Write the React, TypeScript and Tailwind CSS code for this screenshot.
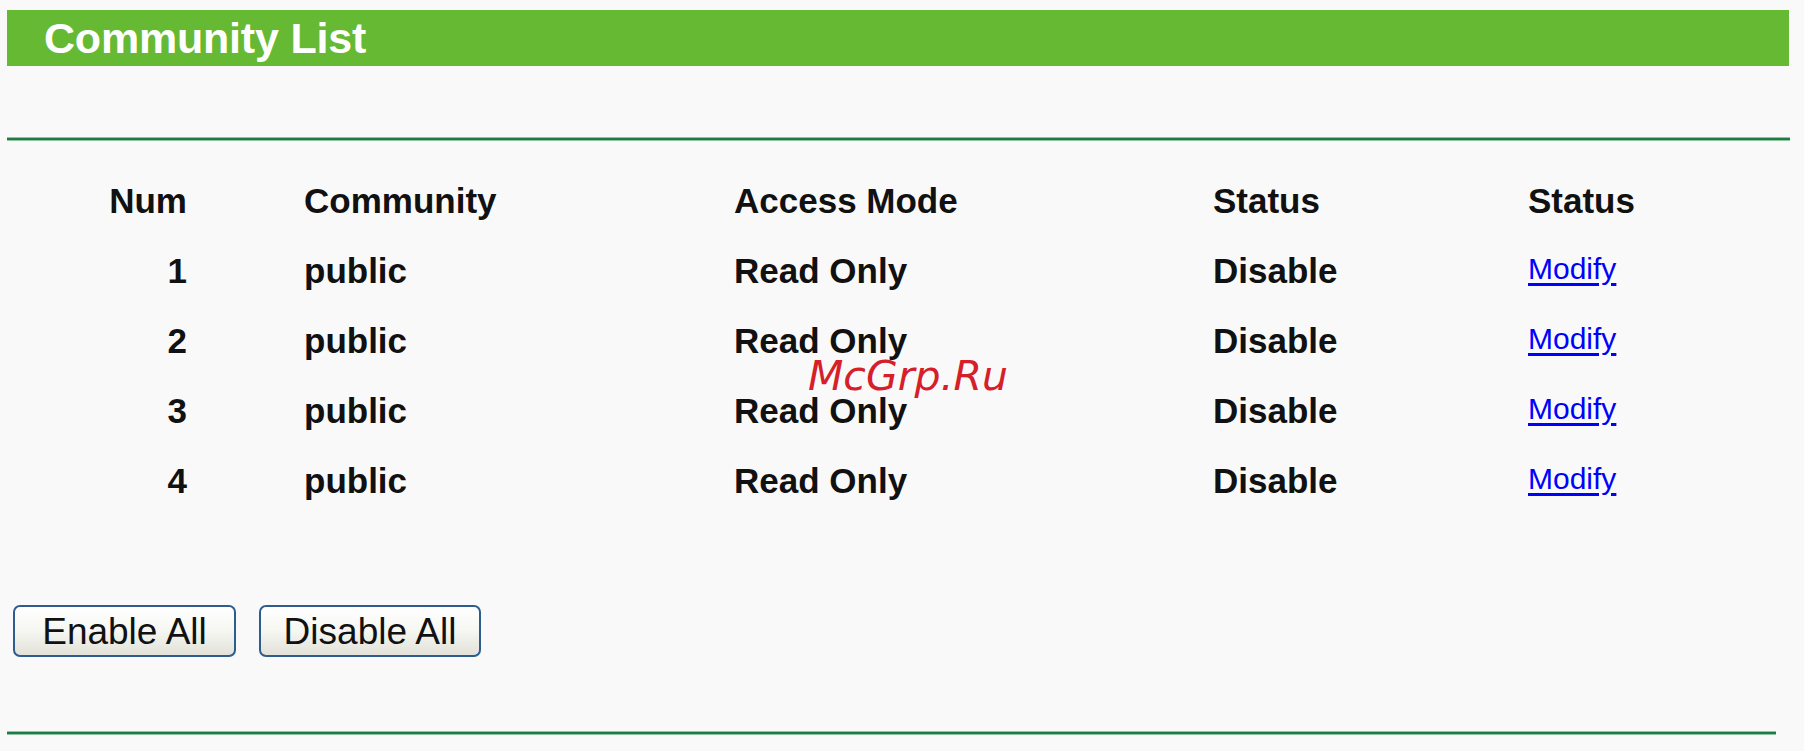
const rows = [
  { num: 1, community: 'public', mode: 'Read Only', status: 'Disable' },
  { num: 2, community: 'public', mode: 'Read Only', status: 'Disable' },
  { num: 3, community: 'public', mode: 'Read Only', status: 'Disable' },
  { num: 4, community: 'public', mode: 'Read Only', status: 'Disable' },
]

function Rule({ width }: { width: string }) {
  return <div className={`${width} h-[4px] border-y border-[#8fc6a2] bg-[#1f7a45]`} />
}

function Row({ cells, link }: { cells: string[]; link?: boolean }) {
  return (
    <div className="grid grid-cols-[180px_547px_479px_315px_1fr] h-[70px] items-center leading-none text-[35px] font-bold text-[#111]">
      <div className="text-right">{cells[0]}</div>
      <div className="pl-[117px]">{cells[1]}</div>
      <div>{cells[2]}</div>
      <div>{cells[3]}</div>
      {link ? (
        <div className="pb-[8px]">
          <a href="#" className="text-[30px] font-normal text-[#0000ff] underline underline-offset-[4px]">
            Modify
          </a>
        </div>
      ) : (
        <div>{cells[4]}</div>
      )}
    </div>
  )
}

export default function App() {
  return (
    <div
      className="relative h-[751px] w-[1804px] overflow-hidden bg-[#f9f9f9] pl-[7px] pt-[10px]"
      style={{ fontFamily: '"Liberation Sans", Arial, sans-serif' }}
    >
      {/* Title bar */}
      <div className="flex h-[56px] w-[1782px] items-center bg-[#66b933] pl-[37px]">
        <h1 className="text-[43px] font-bold leading-none tracking-[-0.2px] text-white">Community List</h1>
      </div>

      <div className="mt-[71px]">
        <Rule width="w-[1783px]" />
      </div>

      {/* Table */}
      <div className="mt-[24px]">
        <Row cells={['Num', 'Community', 'Access Mode', 'Status', 'Status']} />
        {rows.map((r) => (
          <Row key={r.num} cells={[String(r.num), r.community, r.mode, r.status]} link />
        ))}
      </div>

      {/* Buttons */}
      <div className="mt-[90px] ml-[6px] flex gap-[23px]">
        <button className="h-[52px] w-[223px] rounded-[7px] border-2 border-[#2d5d8f] bg-gradient-to-b from-white via-[#f6f6f2] to-[#e2e2da] text-[37px] leading-none text-[#111]">
          Enable All
        </button>
        <button className="h-[52px] w-[222px] rounded-[7px] border-2 border-[#2d5d8f] bg-gradient-to-b from-white via-[#f6f6f2] to-[#e2e2da] text-[37px] leading-none text-[#111]">
          Disable All
        </button>
      </div>

      <div className="mt-[74px]">
        <Rule width="w-[1769px]" />
      </div>

      {/* Watermark */}
      <div
        className="absolute left-[808px] top-[356px] text-[41px] italic leading-none text-[#d5202a]"
        style={{ fontFamily: '"DejaVu Sans", sans-serif' }}
      >
        McGrp.Ru
      </div>
    </div>
  )
}
